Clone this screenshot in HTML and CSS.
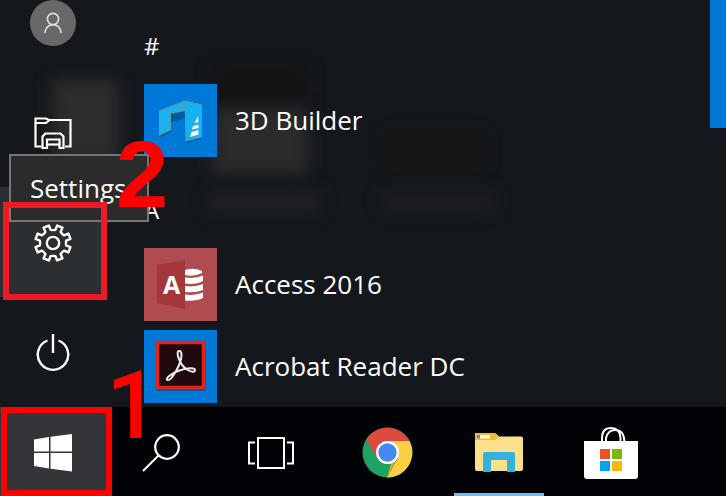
FILE: index.html
```html
<!DOCTYPE html>
<html lang="en">
<head>
  <meta charset="UTF-8">
  <meta name="viewport" content="width=device-width, initial-scale=1">
  <title>Start menu</title>
  <link rel="stylesheet" href="styles.css">
</head>
<body>

  <main class="start-menu">
    <!-- desktop icons showing through the acrylic -->
    <div class="backdrop" aria-hidden="true">
      <span class="ghost ghost-folder"></span>
      <span class="ghost ghost-dark"></span>
      <span class="ghost ghost-page"></span>
      <span class="ghost ghost-label"></span>
      <span class="ghost ghost-icon"></span>
      <span class="ghost ghost-caption"></span>
    </div>

    <nav class="rail">
      <button class="rail-button" type="button" aria-label="Account">
        <span class="avatar">
          <svg width="20" height="22" viewBox="0 0 20 22" fill="none" stroke="#e4e4e4" stroke-width="1.6">
            <circle cx="10" cy="7" r="5.6"/>
            <path d="M1.8 21C2.6 15.6 5.8 12.8 10 12.8S17.4 15.6 18.2 21"/>
          </svg>
        </span>
      </button>
      <button class="rail-button" type="button" aria-label="File Explorer">
        <svg width="38" height="34" viewBox="0 0 38 34" fill="none" stroke="#fff" stroke-width="2.2">
          <path d="M7.500 30.500H1.500V2.500H12L15 4H36.500V30.500H31"/>
          <path d="M1.500 7H12L15 4.500"/>
          <path d="M8.500 32V20.500L11.500 17.500H26.500L29.500 20.500V32H25.500V23.500H13V32Z"/>
          <path d="M13 28.500H25"/>
        </svg>
      </button>
      <div class="rail-slot">
        <button class="rail-button is-active" type="button" aria-labelledby="settings-tip">
          <svg width="38" height="38" viewBox="-18.500 -18.500 37 37" fill="none" stroke="#fff" stroke-width="2.3" stroke-linejoin="round">
            <path d="M12.8 2.4L17 4L14.900 9.200L10.700 7.400Q8.800 8.800 7.400 10.700L9.200 14.900L4 17L2.400 12.800Q0 12.400 -2.400 12.800L-4 17L-9.200 14.900L-7.400 10.700Q-8.800 8.800 -10.700 7.400L-14.900 9.200L-17 4L-12.800 2.400Q-12.400 0 -12.800 -2.400L-17 -4L-14.900 -9.200L-10.700 -7.400Q-8.800 -8.800 -7.400 -10.700L-9.200 -14.900L-4 -17L-2.400 -12.800Q0 -12.400 2.400 -12.800L4 -17L9.200 -14.900L7.400 -10.700Q8.800 -8.800 10.700 -7.400L14.900 -9.200L17 -4L12.800 -2.400Q12.400 0 12.800 2.400Z"/>
            <circle r="6"/>
          </svg>
        </button>
        <span class="tooltip" id="settings-tip" role="tooltip">Settings</span>
        <span class="mark-box mark-settings"></span>
        <span class="mark-number mark-two">2</span>
      </div>
      <button class="rail-button" type="button" aria-label="Power">
        <svg width="34" height="38" viewBox="0 0 34 38" fill="none" stroke="#fff" stroke-width="2.4">
          <path d="M17 0V19"/>
          <path d="M11.500 6.500A15.200 15.200 0 1 0 22.500 6.500"/>
        </svg>
      </button>
    </nav>

    <section class="app-list">
      <h2 class="letter">#</h2>
      <a class="app" href="#">
        <span class="app-tile">
          <svg width="73" height="73" viewBox="0 0 73 73">
            <path d="M17 28L41 18L58 22V54L43 59V34L27 38V48L17 53Z" fill="#064d8c" opacity=".7"/>
            <path d="M15.500 26.500L40 16.500L57 20.500L56 25L42 27L26 30L15.500 27Z" fill="#2ba5d6"/>
            <path d="M15.500 27L41 18.500V25L26.500 29V46L15.500 51Z" fill="#1ab3f0" stroke="#5c9da8" stroke-width="1"/>
            <path d="M41 17L57.500 21V53L42 57Z" fill="#16b1f2" stroke="#5c9da8" stroke-width="1"/>
            <path d="M54 32L50.500 39L54.500 38ZM49 42L54.500 40.500V44L48 45.500ZM47.500 48L54.500 46V50.500L46 53Z" fill="#fff"/>
          </svg>
        </span>
        3D Builder
      </a>
      <h2 class="letter">A</h2>
      <a class="app" href="#">
        <span class="app-tile tile-access">
          <svg width="73" height="73" viewBox="0 0 73 73">
            <path d="M13 17L41 12V61L13 55Z" fill="#a4373a"/>
            <g fill="#fff">
              <path d="M41 22Q50 19 58 23V25Q50 29 41 27Z"/>
              <path d="M41 29.500Q51 31 59 27.500V33Q52 37 41 35.500Z"/>
              <path d="M41 38Q51 39.500 59 36V42Q52 45 41 44Z"/>
              <path d="M41 46.500Q51 48 59 44.500V50Q52 53.500 41 52.500Z"/>
            </g>
            <text class="access-letter" x="19" y="46">A</text>
          </svg>
        </span>
        Access 2016
      </a>
      <a class="app" href="#">
        <span class="app-tile">
          <svg width="73" height="73" viewBox="0 0 73 73">
            <rect x="12" y="12" width="50" height="49" rx="2" fill="#07559f"/>
            <rect x="13.500" y="12.500" width="46" height="45" fill="#210a0e" stroke="#e1251b" stroke-width="3.500"/>
            <path d="M35 21C31.500 21 35 33 41 38C46 42 51 43 51 40C51 37 42 38 34 41C26 44 21 49 23.500 50C27 51.500 37.500 34 37.500 25C37.500 22 36.500 21 35 21Z" fill="none" stroke="#eee" stroke-width="2"/>
          </svg>
        </span>
        Acrobat Reader DC
      </a>
    </section>

    <aside class="live-tile"></aside>
  </main>

  <footer class="taskbar">
    <button class="task start" type="button" aria-label="Start">
      <svg width="38" height="38" viewBox="0 0 38 38" fill="#fff">
        <path d="M0 5.500L15 3V17.500H0ZM16.500 2.800L38 0V17.500H16.500ZM0 19H15V34.500L0 32ZM16.500 19H38V37.500L16.500 34.700Z"/>
      </svg>
    </button>
    <button class="task" type="button" aria-label="Search">
      <svg width="38" height="38" viewBox="0 0 38 38" fill="none" stroke="#fff" stroke-width="2.2">
        <circle cx="25" cy="13" r="11.800"/>
        <path d="M16.500 21.500L1 37"/>
      </svg>
    </button>
    <button class="task" type="button" aria-label="Task View">
      <svg width="48" height="34" viewBox="0 0 48 34" fill="none" stroke="#fff" stroke-width="2">
        <path d="M11 2H37V32H11Z"/>
        <path d="M8 6.500H2V27.500H8M40 6.500H46V27.500H40"/>
      </svg>
    </button>
    <div class="pinned">
      <button class="task app-task" type="button" aria-label="Chrome">
        <svg width="51" height="51" viewBox="0 0 51 51">
          <circle cx="25.500" cy="25.500" r="25" fill="#1da362"/>
          <path d="M4.500 12A25 25 0 0 1 47.500 14H25.500L14.500 31Z" fill="#dd4b3e"/>
          <path d="M25.500 14H47.500A25 25 0 0 1 25 50.500L36 31Z" fill="#fdd041"/>
          <path d="M37 28L25 50.500L30 33Z" fill="#d9a62d"/>
          <circle cx="25.500" cy="25.500" r="11.500" fill="#fff"/>
          <circle cx="25.500" cy="25.500" r="9.200" fill="#4688f4"/>
        </svg>
      </button>
      <button class="task app-task is-open" type="button" aria-label="File Explorer">
        <svg width="48" height="40" viewBox="0 0 48 40">
          <path d="M1 0H20L24 3.500H46Q48 3.500 48 5.500V36Q48 38 46 38H2Q0 38 0 36V1Q0 0 1 0Z" fill="#fbe08c"/>
          <path d="M1 0H20L24 3.500L20 7H0V1Q0 0 1 0Z" fill="#f2bb35"/>
          <path d="M2 2H15V5.500H2Z" fill="#fff8dc"/>
          <path d="M2 2H5V5.500H2Z" fill="#38a7a5"/>
          <path d="M8 39V21Q8 19 10 19H38Q40 19 40 21V39H32V27H16V39Z" fill="#35b1df"/>
        </svg>
      </button>
      <button class="task app-task" type="button" aria-label="Microsoft Store">
        <svg width="54" height="52" viewBox="0 0 54 52">
          <path d="M18 15V11Q18 1 27 1T36.500 11V15M22 15V11Q24 3 31 3Q40 3 40.500 15" fill="none" stroke="#fff" stroke-width="2"/>
          <path d="M0 14H54V49Q54 52 51 52H3Q0 52 0 49Z" fill="#fff"/>
          <path d="M16 22H26V32H16Z" fill="#f04e23"/>
          <path d="M28 22H38V32H28Z" fill="#7db700"/>
          <path d="M16 34H26V44H16Z" fill="#00a3ee"/>
          <path d="M28 34H38V44H28Z" fill="#fdb900"/>
        </svg>
      </button>
    </div>
    <span class="mark-box mark-start"></span>
    <span class="mark-number mark-one">1</span>
  </footer>

</body>
</html>
```
FILE: styles.css
```css
* {
  box-sizing: border-box;
}
body {
  margin: 0;
  display: flex;
  flex-direction: column;
  height: 100vh;
  overflow: hidden;
  background: #14181c;
  color: #fff;
  font-family: "Open Sans", "Noto Sans", sans-serif;
}
button {
  padding: 0;
  border: 0;
  background: none;
  color: inherit;
  font: inherit;
}
svg {
  display: block;
}

/* start menu */
.start-menu {
  position: relative;
  flex: 1;
  min-height: 0;
  display: flex;
}
.rail {
  position: relative;
  z-index: 2;
  width: 144px;
  display: flex;
  flex-direction: column;
  justify-content: flex-end;
}
.rail-slot {
  position: relative;
}
.rail-button {
  width: 105px;
  height: 110px;
  padding-top: 2px;
  flex-shrink: 0;
  display: flex;
  align-items: center;
  justify-content: center;
}
.rail-button.is-active {
  background: #2b2f32;
}
.avatar {
  width: 46px;
  height: 46px;
  border-radius: 50%;
  background: #686868;
  display: flex;
  align-items: center;
  justify-content: center;
}
.tooltip {
  position: absolute;
  left: 9px;
  top: -33px;
  width: 140px;
  height: 68px;
  border: 2px solid #767676;
  background: #2b2b2b;
  padding-left: 19px;
  font-size: 26px;
  line-height: 64px;
}

.app-list {
  position: relative;
  flex: 1;
  display: flex;
  flex-direction: column;
  justify-content: flex-end;
}
.letter {
  flex-shrink: 0;
  height: 82px;
  margin: 0;
  padding-top: 16px;
  font-size: 24px;
  font-weight: 400;
  line-height: 66px;
}
.app {
  flex-shrink: 0;
  height: 82px;
  display: flex;
  align-items: center;
  gap: 18px;
  color: #fff;
  font-size: 26px;
  line-height: 38px;
  text-decoration: none;
}
.app-tile {
  width: 73px;
  height: 73px;
  background: #0078d7;
}
.tile-access {
  background: #b04b4f;
}
.access-letter {
  fill: #fff;
  font-size: 25px;
  font-weight: 700;
}
.live-tile {
  position: relative;
  width: 16px;
  height: 128px;
  background: #0078d7;
}

/* blurred desktop */
.backdrop {
  position: absolute;
  inset: 0;
  overflow: hidden;
}
.ghost {
  position: absolute;
  filter: blur(8px);
}
.ghost-folder {
  left: 52px;
  top: 80px;
  width: 66px;
  height: 80px;
  background: linear-gradient(90deg, #2f2b22, #2d2d2e 40%);
}
.ghost-dark {
  left: 212px;
  top: 68px;
  width: 96px;
  height: 40px;
  background: #141414;
}
.ghost-page {
  left: 212px;
  top: 108px;
  width: 96px;
  height: 66px;
  background: #2b2b2c;
}
.ghost-label {
  left: 208px;
  top: 192px;
  width: 112px;
  height: 20px;
  background: #202124;
}
.ghost-icon {
  left: 386px;
  top: 134px;
  width: 98px;
  height: 34px;
  background: #161615;
}
.ghost-caption {
  left: 382px;
  top: 192px;
  width: 112px;
  height: 18px;
  background: #1d1e21;
}

/* taskbar */
.taskbar {
  position: relative;
  z-index: 3;
  height: 89px;
  display: flex;
  background: #010206;
}
.task {
  width: 110px;
  height: 89px;
  padding-top: 2px;
  display: flex;
  align-items: center;
  justify-content: center;
}
.start {
  width: 106px;
  background: #343538;
}
.pinned {
  display: flex;
  margin-left: 5px;
}
.app-task {
  position: relative;
  width: 112px;
}
.is-open::after {
  content: "";
  position: absolute;
  left: 11px;
  right: 11px;
  bottom: 0;
  height: 3px;
  background: #76b9ed;
}

/* step marks */
.mark-box {
  position: absolute;
  pointer-events: none;
}
.mark-settings {
  left: 3px;
  top: 15px;
  width: 104px;
  height: 98px;
  border: 6px solid #ed1c24;
}
.mark-start {
  left: 1px;
  top: 0;
  width: 111px;
  height: 89px;
  border: 6px solid #f00;
}
.mark-number {
  position: absolute;
  color: #f00;
  font-size: 94px;
  font-weight: 700;
  line-height: 94px;
}
.mark-two {
  left: 116px;
  top: -59px;
  font-family: "Liberation Sans", Arial, sans-serif;
}
.mark-one {
  left: 106px;
  top: -48px;
  font-family: Roboto, sans-serif;
  font-weight: 500;
}
```
